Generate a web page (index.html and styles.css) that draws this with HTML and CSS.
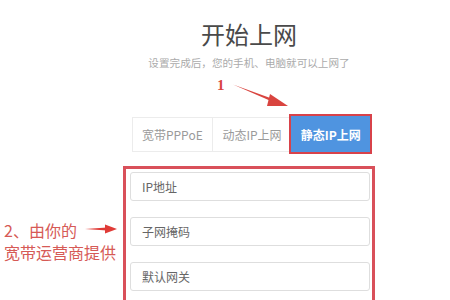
FILE: index.html
```html
<!DOCTYPE html>
<html lang="zh-CN">
<head>
<meta charset="utf-8">
<link rel="stylesheet" href="styles.css">
</head>
<body>
<div class="page">
  <h1 class="title">开始上网</h1>
  <p class="subtitle">设置完成后，您的手机、电脑就可以上网了</p>
  <div class="tabs">
    <div class="tab">宽带PPPoE</div>
    <div class="tab">动态IP上网</div>
    <div class="tab active">静态IP上网</div>
  </div>
  <div class="form-box">
    <div class="field">IP地址</div>
    <div class="field">子网掩码</div>
    <div class="field">默认网关</div>
  </div>
</div>
<div class="note note-1">1</div>
<svg class="arrow arrow-1" width="70" height="40" viewBox="0 0 70 40">
  <path d="M2 2.5 L42 17 L41 19.5 Z" fill="#d9443f"/>
  <path d="M39 12 L57 24 L36 24 Z" fill="#d9443f"/>
</svg>
<div class="note note-2">2、由你的<br>宽带运营商提供</div>
<svg class="arrow arrow-2" width="40" height="14" viewBox="0 0 40 14">
  <path d="M2 7 L24 5.6 L24 8.4 Z" fill="#e03b37"/>
  <path d="M22 2.5 L34 7 L22 11.5 Z" fill="#e03b37"/>
</svg>
</body>
</html>
```
FILE: styles.css
```css
html, body {
  margin: 0;
  padding: 0;
  background: #ffffff;
}
body {
  width: 450px;
  height: 300px;
  overflow: hidden;
  position: relative;
  font-family: "Noto Sans CJK SC", "Noto Sans", sans-serif;
}
.page {
  display: flex;
  flex-direction: column;
  width: 252px;
  margin-left: 123px;
  padding-top: 19px;
}
.title {
  margin: 0;
  font-size: 24px;
  line-height: 30px;
  font-weight: 400;
  color: #4a4a4a;
  text-align: center;
}
.subtitle {
  margin: 7px -20px 0;
  font-size: 10.6px;
  line-height: 14px;
  color: #ababab;
  text-align: center;
}
.tabs {
  display: flex;
  margin: 47px 0 0 9px;
  width: 238px;
  height: 35px;
}
.tab {
  flex: 1;
  display: flex;
  align-items: center;
  justify-content: center;
  border: 1px solid #ececec;
  border-right: none;
  font-size: 12px;
  color: #9a9a9a;
  box-sizing: border-box;
}
.tab.active {
  background: #4f94e0;
  color: #ffffff;
  font-weight: 700;
  border: none;
  outline: 2px solid #d8424a;
  margin-top: -1px;
  height: 36px;
  position: relative;
}
.form-box {
  margin-top: 14px;
  border: 3px solid #d9505a;
  border-bottom: none;
  padding: 3px 2px 0 4px;
  display: flex;
  flex-direction: column;
  gap: 16px;
  height: 134px;
  box-sizing: border-box;
}
.field {
  height: 29px;
  flex-shrink: 0;
  box-sizing: border-box;
  border: 1px solid #dedede;
  border-radius: 3px;
  display: flex;
  align-items: center;
  padding-left: 11px;
  font-size: 12px;
  color: #666666;
}
.note {
  position: absolute;
  color: #d9443f;
}
.note-1 {
  left: 217px;
  top: 77px;
  font-family: "Liberation Serif", serif;
  font-weight: 700;
  font-size: 15px;
  line-height: 16px;
}
.note-2 {
  left: 4px;
  top: 219px;
  font-size: 16px;
  line-height: 22px;
  color: #d65a56;
}
.arrow {
  position: absolute;
}
.arrow-1 {
  left: 231px;
  top: 82px;
}
.arrow-2 {
  left: 83px;
  top: 222px;
}
```
